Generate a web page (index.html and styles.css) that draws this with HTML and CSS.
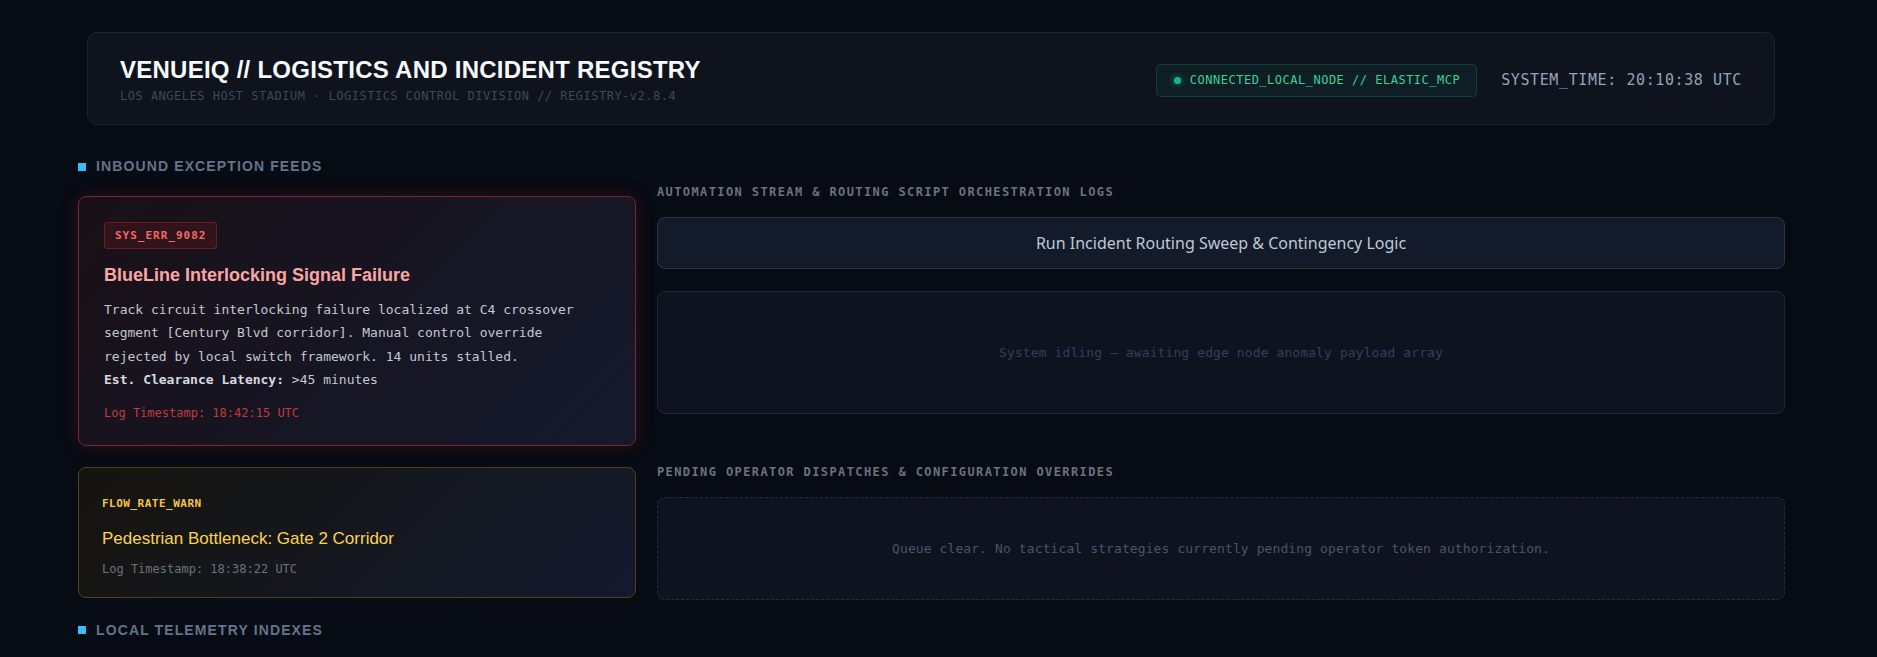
FILE: index.html
```html
<!DOCTYPE html>
<html lang="en">
<head>
    <meta charset="UTF-8">
    <meta name="viewport" content="width=device-width, initial-scale=1.0">
    <title>VenueIQ // Logistics and Incident Registry</title>
    <link rel="stylesheet" href="styles.css">
</head>
<body>
    <div class="shell">
        <header class="topbar">
            <div class="brand">
                <h1>VENUEIQ // LOGISTICS AND INCIDENT REGISTRY</h1>
                <p class="subtitle">LOS ANGELES HOST STADIUM · LOGISTICS CONTROL DIVISION // REGISTRY-v2.8.4</p>
            </div>
            <div class="status">
                <div class="node-pill"><span class="dot"></span>CONNECTED_LOCAL_NODE // ELASTIC_MCP</div>
                <div class="clock">SYSTEM_TIME: 20:10:38 UTC</div>
            </div>
        </header>

        <main class="grid">
            <section class="col-left">
                <h2 class="section-title"><span class="marker"></span>INBOUND EXCEPTION FEEDS</h2>

                <div class="feed-list">
                    <article class="feed-card critical">
                        <span class="code-badge">SYS_ERR_9082</span>
                        <h3 class="feed-title">BlueLine Interlocking Signal Failure</h3>
                        <p class="feed-body">Track circuit interlocking failure localized at C4 crossover segment [Century Blvd corridor]. Manual control override rejected by local switch framework. 14 units stalled.<br><strong>Est. Clearance Latency:</strong> &gt;45 minutes</p>
                        <div class="feed-time">Log Timestamp: 18:42:15 UTC</div>
                    </article>

                    <article class="feed-card warn">
                        <span class="code-label">FLOW_RATE_WARN</span>
                        <h3 class="feed-title">Pedestrian Bottleneck: Gate 2 Corridor</h3>
                        <div class="feed-time">Log Timestamp: 18:38:22 UTC</div>
                    </article>
                </div>

                <h2 class="section-title telemetry"><span class="marker"></span>LOCAL TELEMETRY INDEXES</h2>
            </section>

            <section class="col-right">
                <h3 class="panel-label">AUTOMATION STREAM &amp; ROUTING SCRIPT ORCHESTRATION LOGS</h3>
                <button class="run-btn">Run Incident Routing Sweep &amp; Contingency Logic</button>
                <div class="log-box">System idling — awaiting edge node anomaly payload array</div>

                <h3 class="panel-label pending">PENDING OPERATOR DISPATCHES &amp; CONFIGURATION OVERRIDES</h3>
                <div class="queue-box">Queue clear. No tactical strategies currently pending operator token authorization.</div>
            </section>
        </main>
    </div>
</body>
</html>
```

FILE: styles.css
```css
:root {
    --bg: #070b14;
    --panel: #0e131e;
    --panel-border: #1c2331;
    --mono: "DejaVu Sans Mono", "Liberation Mono", monospace;
    --sans: "Liberation Sans", Arial, sans-serif;
    --accent: #38bdf8;
    --muted: #64748b;
}

* {
    box-sizing: border-box;
    margin: 0;
    padding: 0;
}

body {
    background-color: var(--bg);
    font-family: var(--sans);
    color: #cbd5e1;
    min-height: 100vh;
}

.shell {
    width: 1707px;
    margin-left: 78px;
    padding-top: 32px;
}

/* header */
.topbar {
    margin: 0 10px 33px 9px;
    padding: 23px 32px 20px;
    background-color: var(--panel);
    border: 1px solid var(--panel-border);
    border-radius: 10px;
    display: flex;
    align-items: center;
    justify-content: space-between;
}

.topbar h1 {
    font-family: var(--sans);
    font-size: 24px;
    line-height: 28px;
    font-weight: 700;
    letter-spacing: 0.25px;
    color: #f8fafc;
}

.subtitle {
    margin-top: 4px;
    font-family: var(--mono);
    font-size: 12px;
    line-height: 16px;
    letter-spacing: 0.5px;
    color: #3d495c;
}

.status {
    display: flex;
    align-items: center;
    gap: 24px;
}

.node-pill {
    display: flex;
    align-items: center;
    gap: 9px;
    padding: 8px 16px 8px 17px;
    font-family: var(--mono);
    font-size: 12px;
    line-height: 15px;
    letter-spacing: 0.5px;
    color: #34d399;
    background-color: rgba(16, 185, 129, 0.07);
    border: 1px solid rgba(16, 185, 129, 0.22);
    border-radius: 5px;
}

.dot {
    width: 7px;
    height: 7px;
    border-radius: 50%;
    background-color: #10b981;
    box-shadow: 0 0 6px rgba(16, 185, 129, 0.8);
}

.clock {
    font-family: var(--mono);
    font-size: 15px;
    letter-spacing: 0.6px;
    color: #94a3b8;
}

/* main grid */
.grid {
    display: grid;
    grid-template-columns: 558px 1fr;
    column-gap: 21px;
}

.section-title {
    display: flex;
    align-items: center;
    gap: 10px;
    font-family: var(--sans);
    font-size: 14px;
    line-height: 17px;
    font-weight: 700;
    letter-spacing: 0.08em;
    color: var(--muted);
}

.section-title.telemetry {
    margin-top: 24px;
}

.marker {
    width: 8px;
    height: 8px;
    background-color: var(--accent);
}

.feed-list {
    margin-top: 21px;
    display: flex;
    flex-direction: column;
    gap: 21px;
}

.feed-card {
    border-radius: 8px;
    border: 1px solid;
}

.feed-card.critical {
    padding: 25px 24px 23px 25px;
    background: linear-gradient(135deg, #1a1017 0%, #141a2d 100%);
    border-color: #7a2630;
    box-shadow: 0 0 18px rgba(220, 38, 38, 0.18);
}

.feed-card.warn {
    padding: 25px 24px 19px 23px;
    background: linear-gradient(135deg, #16140f 0%, #131a2d 100%);
    border-color: #54401a;
}

.code-badge {
    display: inline-block;
    padding: 5px 10px;
    font-family: var(--mono);
    font-size: 11px;
    line-height: 15px;
    font-weight: 700;
    letter-spacing: 1px;
    color: #f26a6a;
    background-color: rgba(220, 38, 38, 0.12);
    border: 1px solid rgba(220, 38, 38, 0.4);
    border-radius: 4px;
}

.code-label {
    display: block;
    font-family: var(--mono);
    font-size: 11px;
    line-height: 22px;
    font-weight: 700;
    letter-spacing: 0.5px;
    color: #f5c443;
}

.feed-title {
    font-family: var(--sans);
    line-height: 23px;
}

.critical .feed-title {
    margin-top: 15px;
    font-size: 18px;
    font-weight: 700;
    color: #fca5a5;
}

.warn .feed-title {
    margin-top: 12px;
    font-size: 17px;
    font-weight: 400;
    color: #fcd34d;
}

.feed-body {
    margin-top: 11px;
    font-family: var(--mono);
    font-size: 13px;
    line-height: 1.8;
    color: #c3c8d2;
}

.feed-body strong {
    color: #d6dae1;
}

.feed-time {
    font-family: var(--mono);
    font-size: 12px;
    line-height: 18px;
}

.critical .feed-time {
    margin-top: 12px;
    color: #c2393b;
}

.warn .feed-time {
    margin-top: 10px;
    color: #6b7280;
}

/* right column */
.col-right {
    padding-top: 25px;
    display: flex;
    flex-direction: column;
}

.panel-label {
    font-family: var(--mono);
    font-size: 12px;
    line-height: 18px;
    font-weight: 700;
    letter-spacing: 1.4px;
    color: #6b7280;
}

.panel-label.pending {
    margin-top: 49px;
}

.run-btn {
    margin-top: 16px;
    height: 52px;
    width: 100%;
    font-family: "Noto Sans", "Open Sans", sans-serif;
    font-size: 16px;
    color: #bfc8d6;
    background-color: #131a2a;
    border: 1px solid #2c3648;
    border-radius: 8px;
    cursor: pointer;
}

.log-box,
.queue-box {
    display: flex;
    align-items: center;
    justify-content: center;
    font-family: var(--mono);
    font-size: 13px;
    letter-spacing: 0.1px;
    border-radius: 8px;
}

.log-box {
    margin-top: 22px;
    height: 123px;
    color: #334155;
    background-color: #0f1320;
    border: 1px solid #1f2636;
}

.queue-box {
    margin-top: 16px;
    height: 103px;
    color: #4a5568;
    background-color: #0f131f;
    border: 1px dashed #252d3c;
}
```
